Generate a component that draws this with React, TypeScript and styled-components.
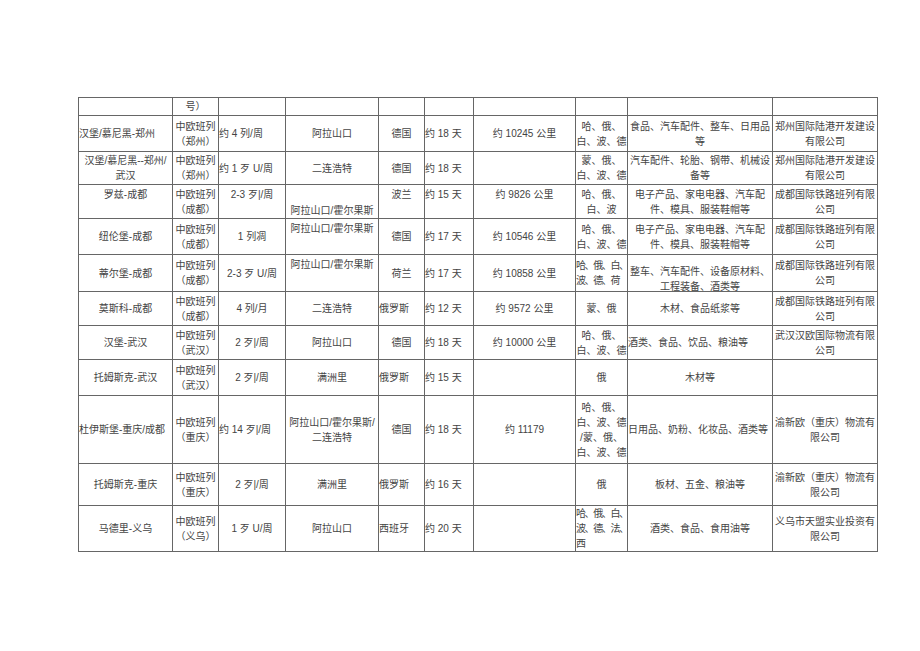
import styled, { createGlobalStyle } from 'styled-components'

type Align = 'left' | 'center'
type VAlign = 'top' | 'middle' | 'bottom'

interface CellSpec {
	t: string
	a?: Align
	v?: VAlign
	shift?: number
	tight?: boolean
}

type Spec = string | CellSpec

interface RowSpec {
	h: number
	cells: Spec[]
}

const GlobalStyle = createGlobalStyle`
	html,
	body {
		margin: 0;
		padding: 0;
		background: #fff;
	}
`

const Page = styled.div`
	padding: 97px 0 0 78px;
	font-family: 'Liberation Sans', 'Noto Sans CJK SC', sans-serif;
	font-size: 10px;
	line-height: 15px;
	color: #444;
`

const Table = styled.table`
	table-layout: fixed;
	border-collapse: collapse;
	width: 800px;
`

const Row = styled.tr<{ $h: number }>`
	height: ${(p) => p.$h}px;
`

const Cell = styled.td<{ $align: Align; $valign: VAlign; $tight: boolean }>`
	border: 1px solid #666;
	padding: ${(p) => (p.$valign === 'top' ? '2px 0 0' : '0')};
	text-align: ${(p) => p.$align};
	vertical-align: ${(p) => p.$valign};
	letter-spacing: ${(p) => (p.$tight ? '-1.4px' : '0')};
	white-space: pre;
	overflow: hidden;
`

const Clip = styled.div<{ $h: number; $shift: number }>`
	height: ${(p) => p.$h}px;
	padding-top: ${(p) => p.$shift}px;
	box-sizing: border-box;
	overflow: hidden;
`

const widths = [94, 46, 67, 93, 46, 49, 102, 52, 145, 105]

const L = (t: string, v: VAlign = 'middle'): CellSpec => ({ t, a: 'left', v })
const T = (t: string): CellSpec => ({ t, v: 'top' })
const N = (t: string): CellSpec => ({ t, a: 'left', tight: true })

const rows: RowSpec[] = [
	{ h: 18, cells: ['', '号）', '', '', '', '', '', '', '', ''] },
	{
		h: 36,
		cells: [
			L('汉堡/慕尼黑-郑州'),
			'中欧班列\n（郑州）',
			L('约 4 列/周'),
			'阿拉山口',
			'德国',
			L('约 18 天'),
			'约 10245 公里',
			'哈、俄、\n白、波、德',
			'食品、汽车配件、整车、日用品\n等',
			'郑州国际陆港开发建设\n有限公司',
		],
	},
	{
		h: 33,
		cells: [
			'汉堡/慕尼黑--郑州/\n武汉',
			'中欧班列\n（郑州）',
			L('约 1 歹 U/周'),
			'二连浩特',
			'德国',
			L('约 18 天'),
			'',
			'蒙、俄、\n白、波、德',
			'汽车配件、轮胎、钢带、机械设\n备等',
			'郑州国际陆港开发建设\n有限公司',
		],
	},
	{
		h: 34,
		cells: [
			T('罗兹-成都'),
			'中欧班列\n（成都）',
			T('2-3 歹|/周'),
			{ t: '阿拉山口/霍尔果斯', v: 'bottom' },
			T('波兰'),
			L('约 15 天', 'top'),
			T('约 9826 公里'),
			'哈、俄、\n白、波',
			'电子产品、家电电器、汽车配\n件、模具、服装鞋帽等',
			'成都国际铁路班列有限\n公司',
		],
	},
	{
		h: 36,
		cells: [
			'纽伦堡-成都',
			'中欧班列\n（成都）',
			'1 列凋',
			T('阿拉山口/霍尔果斯'),
			'德国',
			L('约 17 天'),
			'约 10546 公里',
			'哈、俄、\n白、波、德',
			'电子产品、家电电器、汽车配\n件、模具、服装鞋帽等',
			'成都国际铁路班列有限\n公司',
		],
	},
	{
		h: 35,
		cells: [
			'蒂尔堡-成都',
			'中欧班列\n（成都）',
			'2-3 歹 U/周',
			T('阿拉山口/霍尔果斯'),
			'荷兰',
			L('约 17 天'),
			'约 10858 公里',
			N('哈、俄、白、\n波、德、荷'),
			{ t: '整车、汽车配件、设备原材料、\n工程装备、酒类等', v: 'top', shift: 7 },
			'成都国际铁路班列有限\n公司',
		],
	},
	{
		h: 34,
		cells: [
			'莫斯科-成都',
			'中欧班列\n（成都）',
			'4 列/月',
			'二连浩特',
			L('俄罗斯'),
			L('约 12 天'),
			'约 9572 公里',
			'蒙、俄',
			'木材、食品纸浆等',
			'成都国际铁路班列有限\n公司',
		],
	},
	{
		h: 34,
		cells: [
			'汉堡-武汉',
			'中欧班列\n（武汉）',
			'2 歹|/周',
			'阿拉山口',
			'德国',
			L('约 18 天'),
			'约 10000 公里',
			'哈、俄、\n白、波、德',
			L('酒类、食品、饮品、粮油等'),
			'武汉汉欧国际物流有限\n公司',
		],
	},
	{
		h: 36,
		cells: [
			'托姆斯克-武汉',
			'中欧班列\n（武汉）',
			'2 歹|/周',
			'满洲里',
			L('俄罗斯'),
			L('约 15 天'),
			'',
			'俄',
			'木材等',
			'',
		],
	},
	{
		h: 68,
		cells: [
			L('杜伊斯堡-重庆/成都'),
			'中欧班列\n（重庆）',
			L('约 14 歹|/周'),
			'阿拉山口/霍尔果斯/\n二连浩特',
			'德国',
			L('约 18 天'),
			'约 11179',
			'哈、俄、\n白、波、德\n/蒙、俄、\n白、波、德',
			L('日用品、奶粉、化妆品、酒类等'),
			'渝新欧（重庆）物流有\n限公司',
		],
	},
	{
		h: 42,
		cells: [
			'托姆斯克-重庆',
			'中欧班列\n（重庆）',
			'2 歹|/周',
			'满洲里',
			L('俄罗斯'),
			L('约 16 天'),
			'',
			'俄',
			'板材、五金、粮油等',
			'渝新欧（重庆）物流有\n限公司',
		],
	},
	{
		h: 46,
		cells: [
			'马德里-义乌',
			'中欧班列\n（义乌）',
			'1 歹 U/周',
			'阿拉山口',
			L('西班牙'),
			L('约 20 天'),
			'',
			N('哈、俄、白、\n波、德、法、\n西'),
			'酒类、食品、食用油等',
			'义乌市天盟实业投资有\n限公司',
		],
	},
]

const norm = (s: Spec): CellSpec => (typeof s === 'string' ? { t: s } : s)

const App = (): JSX.Element => {
	return (
		<Page>
			<GlobalStyle />
			<Table>
				<colgroup>
					{widths.map((w, i) => (
						<col key={`col-${i}`} style={{ width: w }} />
					))}
				</colgroup>
				<tbody>
					{rows.map((row, r) => (
						<Row key={`row-${r}`} $h={row.h}>
							{row.cells.map((spec, i) => {
								const { t, a = 'center', v = 'middle', shift, tight = false } = norm(spec)
								return (
									<Cell key={`cell-${r}-${i}`} $align={a} $valign={v} $tight={tight}>
										{shift ? (
											<Clip $h={row.h - 1} $shift={shift}>
												{t}
											</Clip>
										) : (
											t
										)}
									</Cell>
								)
							})}
						</Row>
					))}
				</tbody>
			</Table>
		</Page>
	)
}

export default App
